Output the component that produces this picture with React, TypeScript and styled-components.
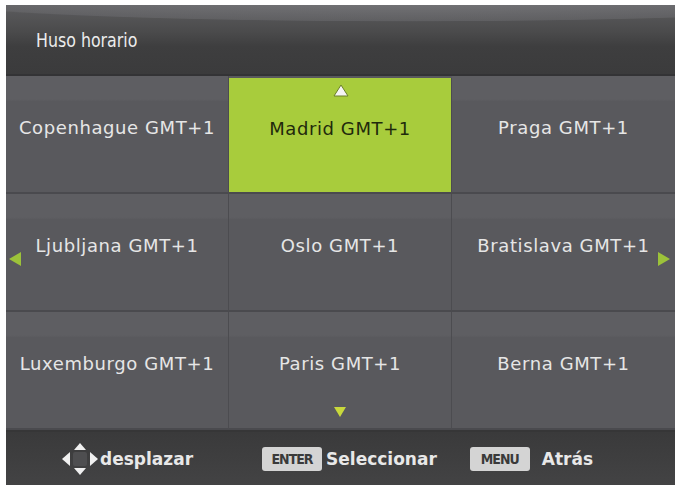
import React from 'react';
import styled, { createGlobalStyle } from 'styled-components';

const GlobalStyle = createGlobalStyle`
  body {
    margin: 0;
    background: #ffffff;
  }
`;

const zones = [
  'Copenhague GMT+1',
  'Madrid GMT+1',
  'Praga GMT+1',
  'Ljubljana GMT+1',
  'Oslo GMT+1',
  'Bratislava GMT+1',
  'Luxemburgo GMT+1',
  'Paris GMT+1',
  'Berna GMT+1',
];

const SELECTED = 1;

const Screen = styled.div`
  margin: 5px 0 0 6px;
  width: 669px;
  height: 480px;
  display: flex;
  flex-direction: column;
  background: #3f3f40;
  font-family: 'DejaVu Sans', sans-serif;
`;

const Header = styled.div`
  height: 71px;
  display: flex;
  align-items: center;
  padding: 0 0 0 30px;
  box-sizing: border-box;
  background:
    radial-gradient(ellipse 120% 55% at 60% -10%, rgba(134, 134, 138, 0.6) 0%, rgba(112, 112, 116, 0.45) 60%, rgba(0, 0, 0, 0) 62%),
    linear-gradient(180deg, #5c5c5e 0%, #4a4a4b 40%, #3e3e3f 60%, #3b3b3c 100%);
  border-bottom: 2px solid #333335;
  color: #ececec;
`;

const Title = styled.h1`
  margin: 0;
  font-family: 'DejaVu Sans Condensed', 'DejaVu Sans', sans-serif;
  font-size: 17.6px;
  font-weight: normal;
  transform: scaleY(1.15);
`;

const GridWrap = styled.div`
  position: relative;
  flex: 0 0 354px;
`;

const Grid = styled.div`
  height: 100%;
  display: grid;
  grid-template-columns: repeat(3, 1fr);
  grid-template-rows: repeat(3, 1fr);
  background: #59595d;
`;

const Cell = styled.div<{ $active?: boolean }>`
  display: flex;
  align-items: center;
  justify-content: center;
  padding-bottom: 14px;
  box-sizing: border-box;
  border-right: 1px solid #4c4c50;
  border-bottom: 2px solid #4a4a4e;
  background: ${({ $active }) =>
    $active ? '#a8cc3c' : 'linear-gradient(180deg, #5e5e62 0%, #5e5e62 20%, #59595d 22%, #59595d 100%)'};
  color: ${({ $active }) => ($active ? '#1f2a0c' : '#e6e6e6')};
  font-size: 18px;
  letter-spacing: 0.6px;
  white-space: nowrap;
  ${({ $active }) => ($active ? 'margin: 2px 0 0;' : '')}

  &:nth-child(3n) {
    border-right: none;
  }
`;

const Arrow = styled.svg<{ $x: number; $y: number }>`
  position: absolute;
  left: ${({ $x }) => $x}px;
  top: ${({ $y }) => $y}px;
`;

const Footer = styled.div`
  flex: 1;
  display: flex;
  align-items: center;
  background: linear-gradient(180deg, #3a3a3b 0%, #434344 100%);
  border-top: 2px solid #363637;
  color: #e8e8e8;
  font-size: 17px;
  font-weight: bold;
`;

const Hint = styled.div<{ $left: number }>`
  display: flex;
  align-items: center;
  margin-left: ${({ $left }) => $left}px;
`;

const Key = styled.span<{ $gap: number }>`
  display: inline-flex;
  align-items: center;
  justify-content: center;
  width: 60px;
  height: 24px;
  border-radius: 3px;
  background: #d4d4d4;
  color: #3a3a3a;
  font-family: 'DejaVu Sans Condensed', 'DejaVu Sans', sans-serif;
  font-size: 14px;
  font-weight: bold;
  letter-spacing: -1px;
  margin-right: ${({ $gap }) => $gap}px;
`;

const NavCross = () => (
  <svg width="36" height="32" viewBox="0 0 36 32" style={{ marginRight: 2 }}>
    <polygon points="18,0 24,7 12,7" fill="#f0f0f0" />
    <polygon points="18,32 24,25 12,25" fill="#f0f0f0" />
    <polygon points="0,16 8,9 8,23" fill="#f0f0f0" />
    <polygon points="36,16 28,9 28,23" fill="#f0f0f0" />
    <rect x="11" y="9" width="14" height="14" rx="2" fill="#4e4e50" />
  </svg>
);

export default function App() {
  return (
    <>
      <GlobalStyle />
      <Screen>
        <Header>
          <Title>Huso horario</Title>
        </Header>
        <GridWrap>
          <Grid>
            {zones.map((z, i) => (
              <Cell key={z} $active={i === SELECTED}>
                {z}
              </Cell>
            ))}
          </Grid>
          {/* scroll indicators */}
          <Arrow $x={327} $y={8} width="16" height="13" viewBox="0 0 16 13">
            <polygon points="8,1 15,12 1,12" fill="#f4f4f4" stroke="#6b7f2a" strokeWidth="1" />
          </Arrow>
          <Arrow $x={2} $y={175} width="14" height="16" viewBox="0 0 14 16">
            <polygon points="1,8 13,1 13,15" fill="#9cc23a" />
          </Arrow>
          <Arrow $x={651} $y={175} width="14" height="16" viewBox="0 0 14 16">
            <polygon points="13,8 1,1 1,15" fill="#9cc23a" />
          </Arrow>
          <Arrow $x={327} $y={330} width="14" height="12" viewBox="0 0 14 12">
            <polygon points="7,11 1,1 13,1" fill="#c8d83c" />
          </Arrow>
        </GridWrap>
        <Footer>
          <Hint $left={56}>
            <NavCross />
            <span>desplazar</span>
          </Hint>
          <Hint $left={69}>
            <Key $gap={4}>ENTER</Key>
            <span>Seleccionar</span>
          </Hint>
          <Hint $left={33}>
            <Key $gap={12}>MENU</Key>
            <span>Atrás</span>
          </Hint>
        </Footer>
      </Screen>
    </>
  );
}
